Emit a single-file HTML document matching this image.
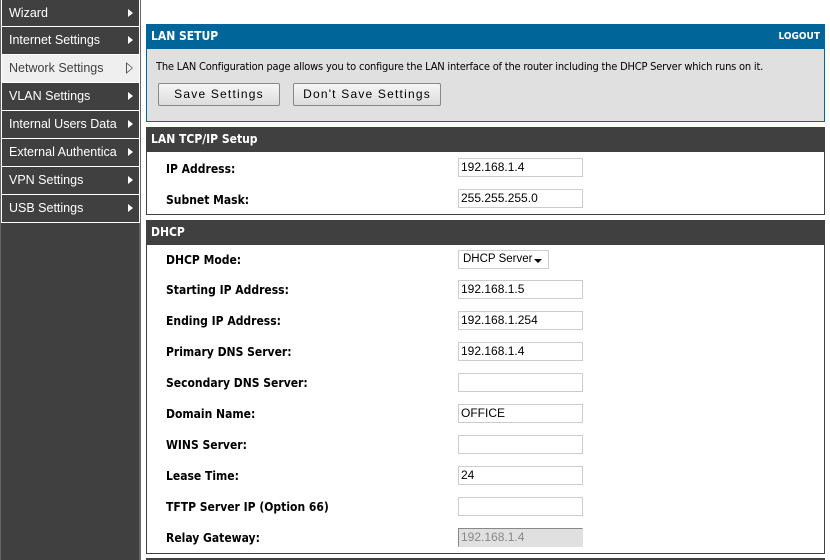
<!DOCTYPE html>
<html><head><style>
*{margin:0;padding:0;box-sizing:border-box}
body{width:830px;height:560px;background:#fff;font-family:"DejaVu Sans","Liberation Sans",sans-serif;position:relative;overflow:hidden}
.side{position:absolute;left:0;top:0;width:141px;height:560px;background:#404040;border-left:1px solid #666;border-right:2px solid #666}
.it{position:absolute;left:0;width:139px;height:28px;border:1px solid #fff;border-top:none;color:#fff;font-family:"Liberation Sans",sans-serif;font-size:12.5px;line-height:26px;padding-left:7px;background:#404040}
.it.a{background:#efefef;color:#404040}
.it .ar{position:absolute;right:6px;top:9px;width:0;height:0;border-left:5px solid #fff;border-top:4.5px solid transparent;border-bottom:4.5px solid transparent}
.it.a .ar{border-left-color:#555;top:7px;border-left-width:7px;border-top-width:6px;border-bottom-width:6px}
.it.a .ar:after{content:"";position:absolute;left:-6px;top:-4px;border-left:5px solid #efefef;border-top:4px solid transparent;border-bottom:4px solid transparent}
.pan{position:absolute;left:146px;width:679px}
.hd{height:25px;color:#fff;font-weight:bold;font-size:12px;padding-left:5px;line-height:25px;font-family:"DejaVu Sans Condensed","DejaVu Sans",sans-serif}
.lbl{position:absolute;left:19px;font-weight:bold;font-size:12px;font-family:"DejaVu Sans Condensed","DejaVu Sans",sans-serif;color:#000}
.in{position:absolute;left:311px;width:125px;height:19px;border:1px solid #ccc;font-family:"Liberation Sans",sans-serif;font-size:12px;line-height:17px;padding-left:2px;background:#fff}
.btn{position:absolute;height:23px;border:1px solid #888;border-radius:2px;background:linear-gradient(#f6f6f6,#dcdcdc);font-family:"Liberation Sans",sans-serif;font-size:12px;line-height:21px;text-align:center;letter-spacing:1.2px}
</style></head><body>
<div class="side">
<div class="it" style="top:0;height:27px">Wizard<span class="ar"></span></div>
<div class="it" style="top:27px">Internet Settings<span class="ar"></span></div>
<div class="it a" style="top:55px">Network Settings<span class="ar"></span></div>
<div class="it" style="top:83px">VLAN Settings<span class="ar"></span></div>
<div class="it" style="top:111px">Internal Users Data<span class="ar"></span></div>
<div class="it" style="top:139px">External Authentica<span class="ar"></span></div>
<div class="it" style="top:167px">VPN Settings<span class="ar"></span></div>
<div class="it" style="top:195px">USB Settings<span class="ar"></span></div>
</div>

<div class="pan" style="top:24px;height:98px;border:1px solid #006699;background:#e0e0e0">
<div class="hd" style="background:#006699;margin:-1px -1px 0 -1px">LAN SETUP<span style="position:absolute;right:4px;font-size:10px">LOGOUT</span></div>
<div style="position:absolute;left:9px;top:35px;font-size:11px;letter-spacing:-0.2px;font-family:'DejaVu Sans Condensed','DejaVu Sans',sans-serif">The LAN Configuration page allows you to configure the LAN interface of the router including the DHCP Server which runs on it.</div>
</div>
<div class="btn" style="left:158px;top:83px;width:122px">Save Settings</div>
<div class="btn" style="left:293px;top:83px;width:148px">Don't Save Settings</div>

<div class="pan" style="top:127px;height:88px;border:1px solid #404040;border-top:none">
<div class="hd" style="background:#404040;margin:0 -1px">LAN TCP/IP Setup</div>
<div class="lbl" style="top:35px">IP Address:</div><div class="in" style="top:31px">192.168.1.4</div>
<div class="lbl" style="top:66px">Subnet Mask:</div><div class="in" style="top:62px">255.255.255.0</div>
</div>

<div class="pan" style="top:220px;height:334px;border:1px solid #404040;border-top:none">
<div class="hd" style="background:#404040;margin:0 -1px">DHCP</div>
<div class="lbl" style="top:33px">DHCP Mode:</div>
<div class="in" style="top:30px;width:91px;font-size:11.5px;padding-left:4px">DHCP Server<span style="position:absolute;right:6px;top:8px;border-top:4px solid #000;border-left:4px solid transparent;border-right:4px solid transparent"></span></div>
<div class="lbl" style="top:63px">Starting IP Address:</div><div class="in" style="top:60px">192.168.1.5</div>
<div class="lbl" style="top:94px">Ending IP Address:</div><div class="in" style="top:91px">192.168.1.254</div>
<div class="lbl" style="top:125px">Primary DNS Server:</div><div class="in" style="top:122px">192.168.1.4</div>
<div class="lbl" style="top:156px">Secondary DNS Server:</div><div class="in" style="top:153px"></div>
<div class="lbl" style="top:187px">Domain Name:</div><div class="in" style="top:184px">OFFICE</div>
<div class="lbl" style="top:218px">WINS Server:</div><div class="in" style="top:215px"></div>
<div class="lbl" style="top:249px">Lease Time:</div><div class="in" style="top:246px">24</div>
<div class="lbl" style="top:280px">TFTP Server IP (Option 66)</div><div class="in" style="top:277px"></div>
<div class="lbl" style="top:311px">Relay Gateway:</div><div class="in" style="top:308px;background:#e0e0e0;color:#888;border-color:#888 #e0e0e0 #e0e0e0 #888">192.168.1.4</div>
</div>
<div style="position:absolute;left:146px;top:558px;width:679px;height:2px;background:#404040"></div>
</body></html>
